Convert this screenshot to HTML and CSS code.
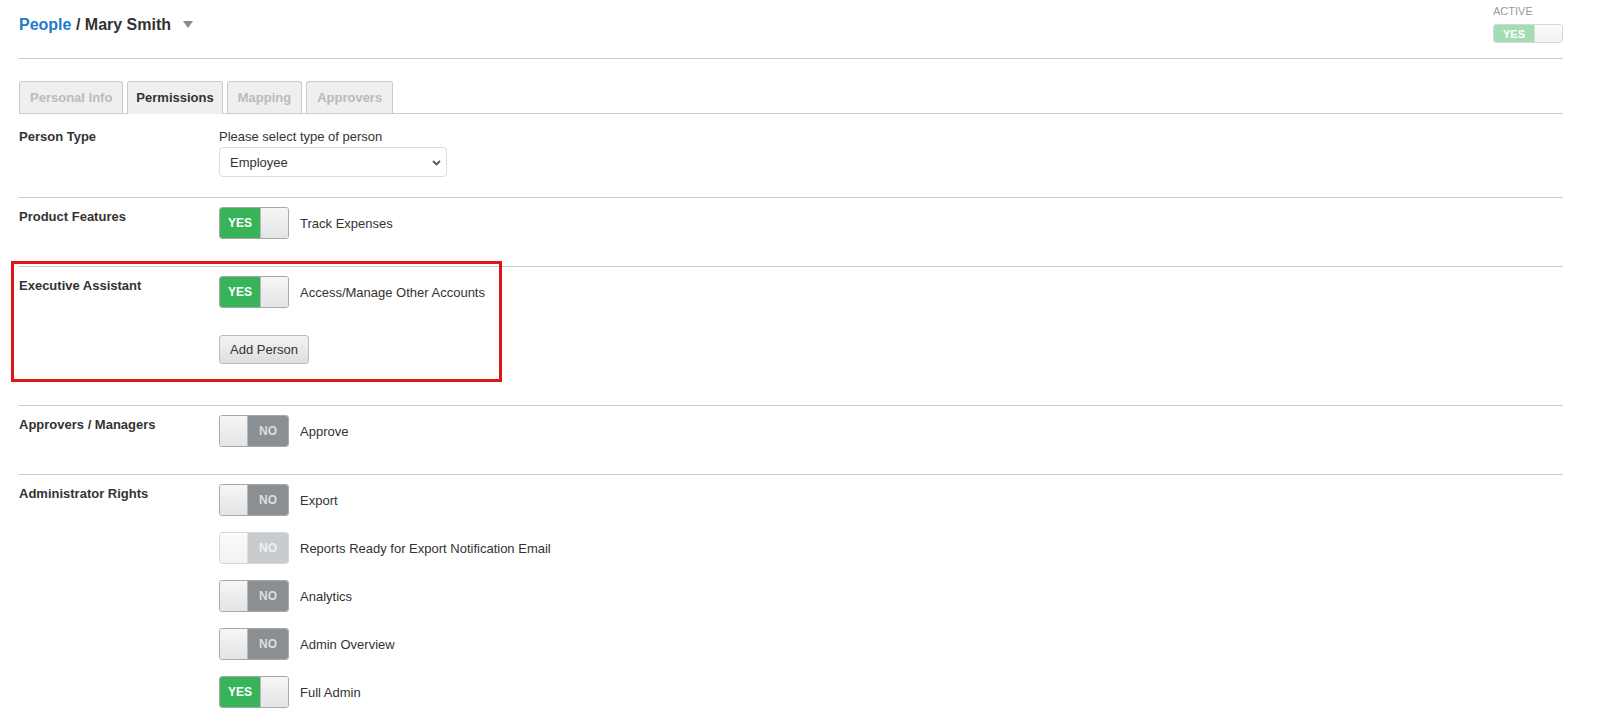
FILE: index.html
```html
<!DOCTYPE html>
<html lang="en">

<head>
    <meta charset="UTF-8">
    <meta name="viewport" content="width=device-width, initial-scale=1.0">
    <title>People / Mary Smith</title>
    <link rel="stylesheet" href="styles.css">
</head>

<body>

    <div class="page">
        <div class="page-header">
            <h1 class="title">
                <a href="#" class="crumb">People</a> / Mary Smith
                <svg class="caret" width="10" height="7" viewBox="0 0 10 7"><path d="M0 0h10L5 7z" fill="#8a8a8a"/></svg>
            </h1>
            <div class="status">
                <div class="status-label">ACTIVE</div>
                <div class="toggle on small disabled">
                    <span class="toggle-state">YES</span>
                    <span class="toggle-knob"></span>
                </div>
            </div>
        </div>

        <div class="tabs">
            <a href="#" class="tab">Personal Info</a>
            <a href="#" class="tab active">Permissions</a>
            <a href="#" class="tab">Mapping</a>
            <a href="#" class="tab">Approvers</a>
        </div>

        <div class="section first">
            <div class="section-label">Person Type</div>
            <div class="section-body">
                <div class="prompt">Please select type of person</div>
                <div class="select-wrap">
                    <select class="select">
                        <option>Employee</option>
                        <option>Contractor</option>
                    </select>
                    <svg class="chevron" width="9" height="6" viewBox="0 0 9 6"><path d="M1 1l3.5 3.5L8 1" fill="none" stroke="#555" stroke-width="1.8"/></svg>
                </div>
            </div>
        </div>

        <div class="section">
            <div class="section-label">Product Features</div>
            <div class="section-body">
                <div class="toggle-row">
                    <div class="toggle on"><span class="toggle-state">YES</span><span class="toggle-knob"></span></div>
                    <span>Track Expenses</span>
                </div>
            </div>
        </div>

        <div class="section highlighted">
            <div class="section-label">Executive Assistant</div>
            <div class="section-body">
                <div class="toggle-row">
                    <div class="toggle on"><span class="toggle-state">YES</span><span class="toggle-knob"></span></div>
                    <span>Access/Manage Other Accounts</span>
                </div>
                <button class="btn">Add Person</button>
            </div>
            <div class="callout"></div>
        </div>

        <div class="section">
            <div class="section-label">Approvers / Managers</div>
            <div class="section-body">
                <div class="toggle-row">
                    <div class="toggle off"><span class="toggle-knob"></span><span class="toggle-state">NO</span></div>
                    <span>Approve</span>
                </div>
            </div>
        </div>

        <div class="section last">
            <div class="section-label">Administrator Rights</div>
            <div class="section-body toggle-list">
                <div class="toggle-row">
                    <div class="toggle off"><span class="toggle-knob"></span><span class="toggle-state">NO</span></div>
                    <span>Export</span>
                </div>
                <div class="toggle-row">
                    <div class="toggle off disabled"><span class="toggle-knob"></span><span class="toggle-state">NO</span></div>
                    <span>Reports Ready for Export Notification Email</span>
                </div>
                <div class="toggle-row">
                    <div class="toggle off"><span class="toggle-knob"></span><span class="toggle-state">NO</span></div>
                    <span>Analytics</span>
                </div>
                <div class="toggle-row">
                    <div class="toggle off"><span class="toggle-knob"></span><span class="toggle-state">NO</span></div>
                    <span>Admin Overview</span>
                </div>
                <div class="toggle-row">
                    <div class="toggle on"><span class="toggle-state">YES</span><span class="toggle-knob"></span></div>
                    <span>Full Admin</span>
                </div>
            </div>
        </div>
    </div>

</body>

</html>
```

FILE: styles.css
```css
body {
    margin: 0;
    background: #ffffff;
    font-family: 'Liberation Sans', Arial, sans-serif;
    font-size: 13px;
    color: #333333;
}

.page {
    width: 1544px;
    margin: 0 0 0 19px;
}

.page-header {
    display: flex;
    justify-content: space-between;
    align-items: flex-start;
    height: 58px;
    border-bottom: 1px solid #cccccc;
}

.title {
    margin: 0;
    padding-top: 14px;
    font-size: 16px;
    line-height: 22px;
    font-weight: bold;
    color: #333333;
}

.crumb {
    color: #1f7acd;
    text-decoration: none;
}

.caret {
    margin-left: 7px;
    vertical-align: 2px;
}

.status {
    padding-top: 5px;
    width: 70px;
}

.status-label {
    font-size: 11px;
    line-height: 13px;
    color: #999999;
    margin-bottom: 6px;
}

/* tabs */

.tabs {
    display: flex;
    gap: 4px;
    margin-top: 22px;
    border-bottom: 1px solid #cccccc;
}

.tab {
    padding: 0 10px;
    height: 31px;
    line-height: 31px;
    border: 1px solid #cccccc;
    border-bottom: none;
    border-radius: 3px 3px 0 0;
    background: #efefef;
    color: #bbbbbb;
    font-weight: bold;
    text-decoration: none;
}

.tab.active {
    color: #333333;
    height: 32px;
    margin-bottom: -1px;
    padding: 0 8px;
}

/* sections */

.section {
    position: relative;
    display: grid;
    grid-template-columns: 200px 1fr;
    padding: 9px 0 27px;
    border-bottom: 1px solid #cccccc;
}

.section.first {
    padding: 13px 0 20px;
}

.section.last {
    border-bottom: none;
    padding-bottom: 9px;
}

.section-label {
    font-weight: bold;
    line-height: 20px;
}

.prompt {
    line-height: 20px;
}

.select-wrap {
    position: relative;
    width: 228px;
}

.select {
    appearance: none;
    -webkit-appearance: none;
    width: 228px;
    height: 30px;
    padding: 0 10px;
    border: 1px solid #dddddd;
    border-radius: 4px;
    background: #ffffff;
    font-family: inherit;
    font-size: 13px;
    color: #333333;
}

.chevron {
    position: absolute;
    right: 6px;
    top: 13px;
}

/* toggles */

.toggle-list {
    display: flex;
    flex-direction: column;
    gap: 16px;
}

.toggle-row {
    display: flex;
    align-items: center;
    gap: 11px;
}

.toggle {
    display: flex;
    width: 70px;
    height: 32px;
    box-sizing: border-box;
    border: 1px solid #a8a8a8;
    border-radius: 3px;
    overflow: hidden;
    flex-shrink: 0;
}

.toggle-state {
    width: 40px;
    display: flex;
    align-items: center;
    justify-content: center;
    font-size: 12px;
    font-weight: bold;
}

.toggle.on .toggle-state {
    background: #37b35a;
    color: #ffffff;
}

.toggle.off .toggle-state {
    background: #8a8f94;
    color: #dedede;
}

.toggle-knob {
    flex: 1;
    background: linear-gradient(#f6f6f6, #e3e4e6);
}

.toggle.on .toggle-knob {
    border-left: 1px solid #b8b8b8;
}

.toggle.off .toggle-knob {
    border-right: 1px solid #b8b8b8;
}

.toggle.disabled {
    opacity: 0.45;
}

.toggle.small {
    height: 19px;
}

.toggle.small .toggle-state {
    font-size: 11px;
}

/* button */

.btn {
    display: block;
    margin: 27px 0 14px;
    height: 29px;
    padding: 0 10px;
    border: 1px solid #bbbbbb;
    border-radius: 3px;
    background: linear-gradient(#f3f3f3, #dedede);
    font-family: inherit;
    font-size: 13px;
    color: #333333;
    cursor: pointer;
}

/* annotation */

.callout {
    position: absolute;
    left: -8px;
    top: -6px;
    width: 491px;
    height: 121px;
    box-sizing: border-box;
    border: 3px solid #e2141b;
    pointer-events: none;
}
```
